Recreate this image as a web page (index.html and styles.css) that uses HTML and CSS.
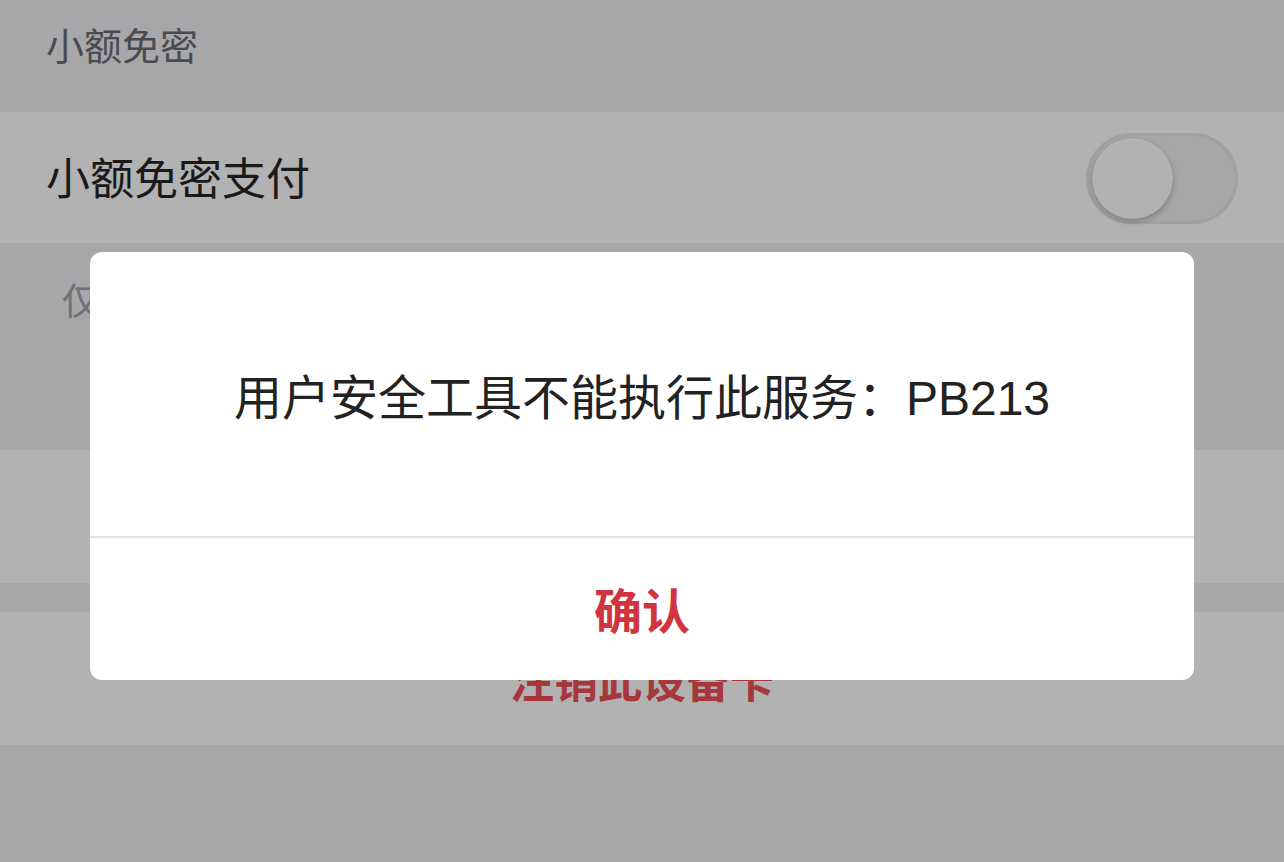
FILE: index.html
```html
<!DOCTYPE html>
<html lang="zh-CN">
<head>
<meta charset="utf-8">
<title>小额免密</title>
<link rel="stylesheet" href="styles.css">
</head>
<body>
<div class="page">
  <div class="section-title">小额免密</div>
  <div class="row row-switch">
    <span class="row-label">小额免密支付</span>
    <span class="switch"><span class="knob"></span></span>
  </div>
  <div class="note">仅限本设备使用</div>
  <div class="row row-blank"></div>
  <div class="gap"></div>
  <div class="row row-danger">注销此设备卡</div>
</div>
<div class="overlay">
  <div class="dialog">
    <div class="dialog-message">用户安全工具不能执行此服务：PB213</div>
    <div class="dialog-divider"></div>
    <div class="dialog-button">确认</div>
  </div>
</div>
</body>
</html>
```
FILE: styles.css
```css
* { box-sizing: border-box; }
html, body {
  margin: 0;
  padding: 0;
}
body {
  width: 1284px;
  height: 862px;
  overflow: hidden;
  background: #efeff4;
  font-family: "Liberation Sans", "Noto Sans CJK SC", sans-serif;
  position: relative;
}
.page {
  display: flex;
  flex-direction: column;
}
.section-title {
  height: 112px;
  padding: 20px 46px 0;
  font-size: 38px;
  line-height: 54px;
  color: #6c6b72;
}
.row {
  background: #ffffff;
}
.row-switch {
  height: 131px;
  padding: 0 46px;
  display: flex;
  align-items: center;
  justify-content: space-between;
}
.row-label {
  font-size: 44px;
  line-height: 60px;
  color: #262626;
  margin-top: 4px;
}
.switch {
  width: 152px;
  height: 91px;
  border-radius: 46px;
  background: #efefef;
  border: 3px solid #e6e6e6;
  display: flex;
  align-items: center;
  padding-left: 3px;
  margin-top: 2px;
}
.knob {
  width: 81px;
  height: 81px;
  border-radius: 50%;
  background: #ffffff;
  box-shadow: 0 3px 6px rgba(0, 0, 0, 0.22), 0 0 1px rgba(0, 0, 0, 0.2);
}
.note {
  height: 207px;
  padding: 34px 62px 0;
  font-size: 37px;
  line-height: 52px;
  color: #9ea3a8;
}
.row-blank {
  height: 133px;
}
.gap {
  height: 29px;
}
.row-danger {
  height: 133px;
  display: flex;
  align-items: center;
  justify-content: center;
  font-size: 44px;
  font-weight: bold;
  color: #ee4f57;
}
.overlay {
  position: absolute;
  inset: 0;
  background: rgba(0, 0, 0, 0.3);
  display: flex;
  justify-content: center;
  align-items: flex-start;
  padding-top: 252px;
}
.dialog {
  width: 1104px;
  height: 428px;
  background: #ffffff;
  border-radius: 12px;
  display: flex;
  flex-direction: column;
  overflow: hidden;
}
.dialog-message {
  height: 284px;
  display: flex;
  align-items: center;
  justify-content: center;
  padding-top: 10px;
  font-size: 48px;
  line-height: 60px;
  color: #222222;
}
.dialog-divider {
  height: 2px;
  background: #e2e2e2;
}
.dialog-button {
  flex: 1;
  display: flex;
  align-items: center;
  justify-content: center;
  padding-bottom: 2px;
  font-size: 48px;
  font-weight: bold;
  color: #d2343f;
}
```
